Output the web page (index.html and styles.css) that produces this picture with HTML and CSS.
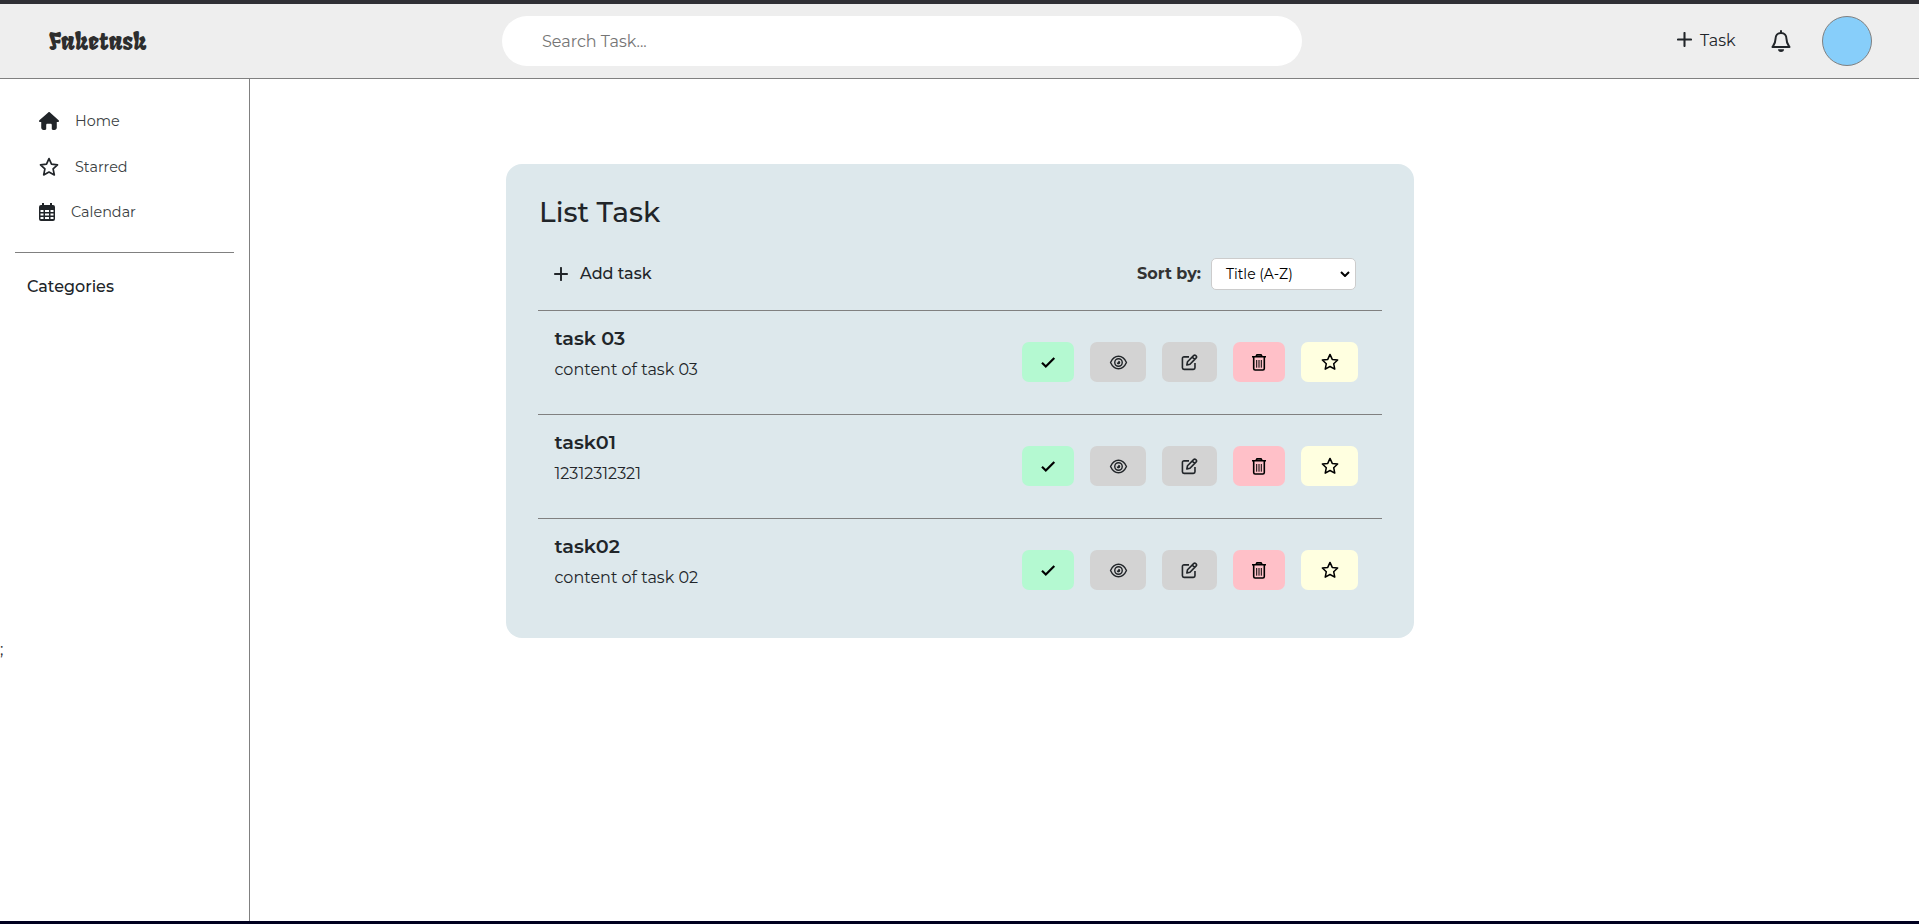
FILE: index.html
```html
<!DOCTYPE html>
<html lang="en">
<head>
<meta charset="utf-8">
<title>Faketask</title>
<link rel="stylesheet" href="styles.css">
</head>
<body>
<svg class="sprite" aria-hidden="true">
  <symbol id="plus" viewBox="0 0 16 16"><path d="M8 1v14M1 8h14" fill="none" stroke="currentColor" stroke-width="2.200" stroke-linecap="round"/></symbol>
  <symbol id="bell" viewBox="0 0 20 22"><path d="M10 1v2M10 3C6.500 3 4.500 5.600 4.500 9c0 4.200-1.300 5.600-3 8h17c-1.700-2.400-3-3.800-3-8 0-3.400-2-6-5.500-6z" fill="none" stroke="currentColor" stroke-width="2" stroke-linejoin="round" stroke-linecap="round"/><path d="M7 19.200h6a3 2.700 0 0 1-6 0z" fill="currentColor"/></symbol>
  <symbol id="home" viewBox="0 0 576 512"><path fill="currentColor" d="M575.800 255.500c0 18-15 32.100-32 32.100h-32l.7 160.200c.2 35.500-28.500 64.300-64 64.300H400c-17.700 0-32-14.300-32-32V368c0-17.700-14.300-32-32-32h-96c-17.700 0-32 14.300-32 32v112c0 17.700-14.300 32-32 32H128.100c-35.300 0-64-28.700-64-64V287.600H32c-18 0-32-14-32-32.100 0-9 3-17 10-24L266.400 8c7-7 15-8 22-8s15 2 21 7L564.800 231.500c8 7 12 15 11 24z"/></symbol>
  <symbol id="star" viewBox="0 0 20 20"><path d="M10 1.600l2.500 5.500 6 .7-4.400 4.100 1.200 6L10 15l-5.300 2.900 1.200-6L1.500 7.800l6-.7z" fill="none" stroke="currentColor" stroke-width="1.700" stroke-linejoin="round"/></symbol>
  <symbol id="calendar" viewBox="0 0 16 18"><path fill="currentColor" fill-rule="evenodd" d="M3 0h2v2h6V0h2v2h1a2 2 0 0 1 2 2v12a2 2 0 0 1-2 2H2a2 2 0 0 1-2-2V4a2 2 0 0 1 2-2h1zM1.500 7v2h3V7zm4.500 0v2h4V7zm5.500 0v2h3V7zM1.500 10.500v2h3v-2zm4.500 0v2h4v-2zm5.500 0v2h3v-2zM1.500 14v2h3v-2zm4.500 0v2h4v-2zm5.500 0v2h3v-2z"/></symbol>
  <symbol id="check" viewBox="0 0 16 16"><path d="M2 8.800l3.800 3.700L14.300 4" fill="none" stroke="currentColor" stroke-width="2.200"/></symbol>
  <symbol id="eye" viewBox="0 0 20 16"><g fill="none" stroke="currentColor" stroke-width="1.500"><path d="M1.500 8C3.300 4 6.200 1.400 10 1.400S16.700 4 18.500 8c-1.800 4-4.700 6.600-8.500 6.600S3.300 12 1.500 8z"/><circle cx="10" cy="8" r="4"/></g><path d="M10 6.200A1.900 1.900 0 1 1 8.100 8.300Q10 8.300 10 6.200z" fill="currentColor"/></symbol>
  <symbol id="edit" viewBox="0 0 18 18"><path d="M8.500 3H3.200A1.700 1.700 0 0 0 1.500 4.700v9.900a1.700 1.700 0 0 0 1.700 1.700h9.900a1.700 1.700 0 0 0 1.700-1.700V9.500M6.200 11.600l.7-3.400 6.700-6.700q1-.7 2 .1l.5.500q.8 1 0 2l-6.600 6.700zM12 3.300l2.600 2.600" fill="none" stroke="currentColor" stroke-width="1.700" stroke-linejoin="round"/></symbol>
  <symbol id="trash" viewBox="0 0 14 17"><path d="M0 2.800h14M4 2.500l1-1.600h4l1 1.600M1.700 3v11.600q0 1.400 1.400 1.400h7.800q1.400 0 1.400-1.400V3" fill="none" stroke="currentColor" stroke-width="1.600"/><path d="M4.700 6v7.700M7 6v7.700M9.300 6v7.700" stroke="currentColor" stroke-width="1"/></symbol>
</svg>

<header class="topbar">
  <div class="logo">Faketask</div>
  <input class="search" type="text" placeholder="Search Task...">
  <div class="actions">
    <svg class="icon-plus"><use href="#plus"/></svg>
    <span class="new-task">Task</span>
    <svg class="icon-bell"><use href="#bell"/></svg>
    <div class="avatar"></div>
  </div>
</header>

<div class="layout">
  <aside class="sidebar">
    <nav class="menu">
      <a class="menu-item"><svg class="icon-home"><use href="#home"/></svg><span>Home</span></a>
      <a class="menu-item"><svg class="icon-star"><use href="#star"/></svg><span>Starred</span></a>
      <a class="menu-item"><svg class="icon-calendar"><use href="#calendar"/></svg><span>Calendar</span></a>
    </nav>
    <div class="categories">Categories</div>
    <span class="stray">;</span>
  </aside>

  <main class="content">
    <section class="card">
      <h1 class="card-title">List Task</h1>
      <div class="toolbar">
        <div class="add-task"><svg class="icon-add"><use href="#plus"/></svg><span>Add task</span></div>
        <div class="sort">
          <span class="sort-label">Sort by:</span>
          <div class="select"><span>Title (A-Z)</span><svg class="chevron" viewBox="0 0 10 6"><path d="M1 1l4 4 4-4" fill="none" stroke="#000" stroke-width="2"/></svg></div>
        </div>
      </div>
      <article class="task">
        <div class="task-text"><h2 class="task-title">task 03</h2><p class="task-body">content of task 03</p></div>
        <div class="buttons">
          <button class="btn done"><svg class="i-check"><use href="#check"/></svg></button>
          <button class="btn view"><svg class="i-eye"><use href="#eye"/></svg></button>
          <button class="btn edit"><svg class="i-edit"><use href="#edit"/></svg></button>
          <button class="btn remove"><svg class="i-trash"><use href="#trash"/></svg></button>
          <button class="btn fav"><svg class="i-star"><use href="#star"/></svg></button>
        </div>
      </article>
      <article class="task">
        <div class="task-text"><h2 class="task-title">task01</h2><p class="task-body">12312312321</p></div>
        <div class="buttons">
          <button class="btn done"><svg class="i-check"><use href="#check"/></svg></button>
          <button class="btn view"><svg class="i-eye"><use href="#eye"/></svg></button>
          <button class="btn edit"><svg class="i-edit"><use href="#edit"/></svg></button>
          <button class="btn remove"><svg class="i-trash"><use href="#trash"/></svg></button>
          <button class="btn fav"><svg class="i-star"><use href="#star"/></svg></button>
        </div>
      </article>
      <article class="task">
        <div class="task-text"><h2 class="task-title">task02</h2><p class="task-body">content of task 02</p></div>
        <div class="buttons">
          <button class="btn done"><svg class="i-check"><use href="#check"/></svg></button>
          <button class="btn view"><svg class="i-eye"><use href="#eye"/></svg></button>
          <button class="btn edit"><svg class="i-edit"><use href="#edit"/></svg></button>
          <button class="btn remove"><svg class="i-trash"><use href="#trash"/></svg></button>
          <button class="btn fav"><svg class="i-star"><use href="#star"/></svg></button>
        </div>
      </article>
    </section>
  </main>
</div>
</body>
</html>
```
FILE: styles.css
```css
* { box-sizing: border-box; }
body {
  margin: 0;
  height: 924px;
  display: flex;
  flex-direction: column;
  overflow: hidden;
  border-top: 4px solid #2f2f35;
  border-bottom: 3px solid #00001f;
  background: #fff;
  color: #212529;
  font-family: Montserrat, Inter, sans-serif;
  font-size: 16px;
  line-height: 24px;
}
svg { display: block; flex: none; }
.sprite { position: absolute; width: 0; height: 0; }
h1, h2, p { margin: 0; }

.topbar {
  flex: none;
  display: flex;
  align-items: center;
  height: 75px;
  padding: 0 47px 0 49px;
  background: #eee;
  border-bottom: 1px solid #808080;
}
.logo {
  width: 453px;
  font: 24px/30px Fruktur, "DejaVu Serif Condensed", "DejaVu Serif", serif;
  color: #2d2d2d;
}
.search {
  width: 800px;
  height: 50px;
  padding: 0 40px;
  border: 0;
  border-radius: 25px;
  background: #fff;
  font: inherit;
}
.search::placeholder { color: #757575; opacity: 1; }
.actions { margin-left: auto; display: flex; align-items: center; }
.icon-plus { width: 15px; height: 15px; margin: -3px 8px 0 0; }
.new-task { width: 71px; margin-top: -1px; }
.icon-bell { width: 20px; height: 22px; margin-right: 31px; }
.avatar {
  width: 50px;
  height: 50px;
  border: 1px solid #808080;
  border-radius: 50%;
  background: #87cefa;
}

.layout { flex: 1; display: flex; min-height: 0; }
.sidebar { position: relative; width: 250px; border-right: 1px solid #808080; padding: 19.5px 15px 0; }
.menu { height: 154.5px; border-bottom: 1px solid #808080; padding-left: 24px; }
.menu-item { display: flex; align-items: center; height: 45.5px; font-size: 14.4px; color: #3b3f43; }
.menu-item svg { color: #212529; }
.icon-home { width: 20px; height: 18px; margin-right: 16px; }
.icon-star { width: 20px; height: 20px; margin-right: 16px; }
.icon-calendar { width: 16px; height: 18px; margin-right: 16px; }
.categories { padding: 22px 0 0 12px; font-weight: 500; }
.stray { position: absolute; left: 0; top: 559px; }

.content { flex: 1; padding: 85px 0 0 256px; }
.card { width: 908px; height: 474px; padding: 30px 32px 0; border-radius: 16px; background: #dde8ec; }
.card-title { padding-left: 1px; font-size: 28px; line-height: 36px; font-weight: 500; }
.toolbar { display: flex; justify-content: space-between; align-items: center; height: 80px; padding: 8px 26px 0 16px; }
.add-task { display: flex; align-items: center; font-weight: 500; }
.icon-add { width: 14px; height: 14px; margin-right: 12px; }
.sort { display: flex; align-items: center; gap: 10px; }
.sort-label { font-weight: 700; color: #333; }
.select {
  display: flex;
  align-items: center;
  justify-content: space-between;
  width: 145px;
  height: 32px;
  padding: 0 5px 0 14px;
  border: 1px solid #ccc;
  border-radius: 5px;
  background: #fff;
  color: #000;
  font-size: 14px;
}
.chevron { width: 10px; height: 6px; }
.task { display: flex; justify-content: space-between; height: 104px; border-top: 1px solid #808080; padding: 15px 24px 0 16.5px; }
.task-title { font-size: 19.2px; line-height: 24px; font-weight: 600; }
.task-body { margin-top: 8px; }
.buttons { display: flex; gap: 16px; padding-top: 16px; }
.btn {
  display: flex;
  align-items: center;
  justify-content: center;
  height: 40px;
  padding: 0;
  border: 0;
  border-radius: 7px;
  color: #000;
}
.done { width: 52px; background: #b4f9d1; }
.view { width: 56px; background: #d3d3d3; color: #212529; }
.edit { width: 55px; background: #d3d3d3; color: #212529; }
.remove { width: 52px; background: #ffc0c8; }
.fav { width: 57px; background: #ffffe0; }
.i-check { width: 16px; height: 16px; }
.i-eye { width: 19px; height: 15px; }
.i-edit { width: 17px; height: 17px; }
.i-trash { width: 14px; height: 17px; }
.i-star { width: 18px; height: 18px; }
```
